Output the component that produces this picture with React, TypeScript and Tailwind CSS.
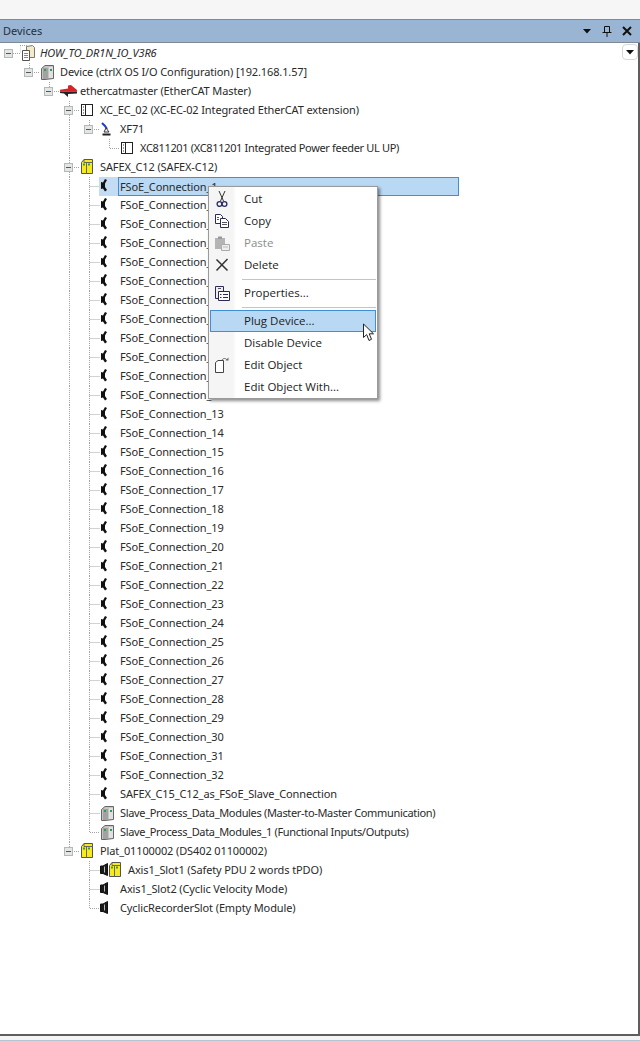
import React from 'react';

type Guide = 'blank' | 'pipe' | 'tee' | 'elbow' | 'exp' | 'expPipe' | 'expRoot';
type IconKind = 'doc' | 'gray' | 'master' | 'slot' | 'arm' | 'yellow' | 'conn' | 'empty' | 'emptyYellow';

type Row = { guides: Guide[]; icon: IconKind; label: string; selected?: boolean; italic?: boolean; tight?: boolean };

const G = '#a4a4a4';

const GuideCell = ({ kind }: { kind: Guide }) => {
  const hasBox = kind === 'exp' || kind === 'expPipe' || kind === 'expRoot';
  return (
    <svg width="20" height="19" className="shrink-0">
      <g stroke={G} strokeDasharray="1 1" fill="none">
        {kind === 'pipe' && <path d="M9.5 0V19" />}
        {kind === 'tee' && <path d="M9.5 0V19M9.5 9.5H20" />}
        {kind === 'elbow' && <path d="M9.5 0V9.5H20" />}
        {kind === 'exp' && <path d="M9.5 0V5M14 9.5H20" />}
        {kind === 'expPipe' && <path d="M9.5 0V5M9.5 14V19M14 9.5H20" />}
        {kind === 'expRoot' && <path d="M13 9.5H20" />}
      </g>
      {hasBox && (
        <g>
          <rect x="4.5" y="5.5" width="8" height="8" fill="#e4e6e6" stroke="#b4b8b8" />
          <path d="M6 9.5H11" stroke="#555" />
        </g>
      )}
    </svg>
  );
};

const NodeIcon = ({ kind }: { kind: IconKind }) => {
  if (kind === 'doc')
    return (
      <svg width="20" height="19" className="shrink-0">
        <path d="M0 1.5H7.5V5M0 1.5V9" stroke={G} strokeDasharray="1 1" fill="none" />
        <path d="M6.5 2.5L12.5 1.5L14.5 3.5V13.5H6.5Z" fill="#f3ecc4" stroke="#777" />
        <path d="M2.5 6.5H9.5V16.5H2.5Z" fill="#fff" stroke="#555" />
        <path d="M4 9.5H8M4 11.5H8M4 13.5H8" stroke="#888" />
      </svg>
    );
  if (kind === 'gray')
    return (
      <svg width="20" height="19" className="shrink-0">
        <path d="M1.5 5.5L5 2.5H13.5V15.5L5 16.5H1.5Z" fill="#c4c4c4" stroke="#666" />
        <rect x="3" y="5" width="5" height="11" fill="#a2a2a2" />
        <rect x="9" y="4" width="4" height="11" fill="#e0e0e0" />
        <path d="M4 6H6V8H4Z" fill="#2f9e55" />
        <path d="M10 6H12V8H10Z" fill="#2f9e55" />
      </svg>
    );
  if (kind === 'master')
    return (
      <svg width="20" height="19" className="shrink-0">
        <path d="M-1 8L8 6.5V3.5L11 3L17 8V9.5H-1Z" fill="#d8232a" />
        <path d="M17 9.5H0V11L4 11.5L8 15V12L17 11.5Z" fill="#222" />
      </svg>
    );
  if (kind === 'slot')
    return (
      <svg width="20" height="19" className="shrink-0">
        <rect x="1.5" y="3.5" width="11" height="11" fill="#fff" stroke="#222" />
        <path d="M5.5 3.5V14.5" stroke="#222" />
        <path d="M3 6H4M3 9H4M3 12H4" stroke="#333" />
      </svg>
    );
  if (kind === 'arm')
    return (
      <svg width="20" height="19" className="shrink-0">
        <path d="M2 3L5 6L7 9" stroke="#1f3fc4" strokeWidth="2" fill="none" />
        <path d="M6 8L9 12H4Z" fill="#fff" stroke="#333" />
        <path d="M2.5 14.5H10.5" stroke="#222" strokeWidth="2" />
      </svg>
    );
  if (kind === 'yellow')
    return (
      <svg width="20" height="19" className="shrink-0">
        <YellowShape x={1} />
      </svg>
    );
  if (kind === 'conn')
    return (
      <svg width="20" height="19" className="shrink-0">
        <path d="M5 2L7 3L5 6.5V10L7 13L5 14.5L3 11.5L1 12V5L3 5.5Z" fill="#111" />
      </svg>
    );
  return (
    <svg width={kind === 'emptyYellow' ? 28 : 20} height="19" className="shrink-0">
      <path d="M0.5 5H3L7.5 2.5V14.5L3 12.5H0.5Z" fill="#1a1a1a" stroke="#111" />
      <path d="M4.5 5.5V11.5" stroke="#bbb" />
      {kind === 'emptyYellow' && <YellowShape x={9} />}
    </svg>
  );
};

const YellowShape = ({ x }: { x: number }) => (
  <g transform={`translate(${x} 0)`}>
    <path d="M0.5 4.5L3 1.5H11.5V15.5H0.5Z" fill="#f6ea1a" stroke="#555" />
    <path d="M5.5 4V15.5M3 1.5V4.5H11.5" stroke="#666" fill="none" />
    <path d="M2 5.5H4V7.5H2ZM7 5.5H9V7.5H7Z" fill="#3e9b45" />
  </g>
);

const blank3: Guide[] = ['blank', 'blank', 'blank'];

const connections: Row[] = Array.from({ length: 32 }, (_, i) => ({
  guides: [...blank3, 'pipe', 'tee'] as Guide[],
  icon: 'conn' as IconKind,
  label: `FSoE_Connection_${i + 1}`,
  selected: i === 0,
}));

const rows: Row[] = [
  { guides: ['expRoot'], icon: 'doc', label: 'HOW_TO_DR1N_IO_V3R6', italic: true },
  { guides: ['blank', 'exp'], icon: 'gray', label: 'Device (ctrlX OS I/O Configuration) [192.168.1.57]' },
  { guides: ['blank', 'blank', 'exp'], icon: 'master', label: 'ethercatmaster (EtherCAT Master)' },
  { guides: [...blank3, 'expPipe'], icon: 'slot', label: 'XC_EC_02 (XC-EC-02 Integrated EtherCAT extension)' },
  { guides: [...blank3, 'pipe', 'exp'], icon: 'arm', label: 'XF71' },
  { guides: [...blank3, 'pipe', 'blank', 'elbow'], icon: 'slot', label: 'XC811201 (XC811201 Integrated Power feeder UL UP)', tight: true },
  { guides: [...blank3, 'expPipe'], icon: 'yellow', label: 'SAFEX_C12 (SAFEX-C12)' },
  ...connections,
  { guides: [...blank3, 'pipe', 'tee'], icon: 'conn', label: 'SAFEX_C15_C12_as_FSoE_Slave_Connection' },
  { guides: [...blank3, 'pipe', 'tee'], icon: 'gray', label: 'Slave_Process_Data_Modules (Master-to-Master Communication)', tight: true },
  { guides: [...blank3, 'pipe', 'elbow'], icon: 'gray', label: 'Slave_Process_Data_Modules_1 (Functional Inputs/Outputs)', tight: true },
  { guides: [...blank3, 'exp'], icon: 'yellow', label: 'Plat_01100002 (DS402 01100002)' },
  { guides: [...blank3, 'blank', 'tee'], icon: 'emptyYellow', label: 'Axis1_Slot1 (Safety PDU 2 words tPDO)' },
  { guides: [...blank3, 'blank', 'tee'], icon: 'empty', label: 'Axis1_Slot2 (Cyclic Velocity Mode)' },
  { guides: [...blank3, 'blank', 'elbow'], icon: 'empty', label: 'CyclicRecorderSlot (Empty Module)' },
];

const TreeRow = ({ row }: { row: Row }) => (
  <div className={row.italic ? "flex h-[20px] items-center font-['Noto_Sans',sans-serif] text-[11px] tracking-[-0.12px]" : "flex h-[19px] items-center font-['Noto_Sans',sans-serif] text-[11px] tracking-[-0.12px]"}>
    {row.guides.map((g, i) => (
      <GuideCell key={i} kind={g} />
    ))}
    <div className={row.selected ? '-ml-px bg-[#c3dcf3] pl-px' : ''}>
      <NodeIcon kind={row.icon} />
    </div>
    {row.selected ? (
      <span className="-ml-[2px] h-[19px] w-[341px] border border-[#3f8fd2] bg-[#b9d8f4] pl-px leading-[17px]">{row.label}</span>
    ) : (
      <span className={row.italic ? 'italic' : row.tight ? 'tracking-[-0.33px]' : ''}>{row.label}</span>
    )}
  </div>
);

const MenuIcon = ({ name }: { name: string }) => {
  if (name === 'Cut')
    return (
      <svg width="12" height="17">
        <path d="M3 0L7.5 10M9 0L4.5 10" stroke="#333" fill="none" />
        <circle cx="3.5" cy="13" r="2.4" fill="none" stroke="#2a2a66" strokeWidth="1.3" />
        <circle cx="8.5" cy="13" r="2.4" fill="none" stroke="#2a2a66" strokeWidth="1.3" />
      </svg>
    );
  if (name === 'Copy')
    return (
      <svg width="16" height="14">
        <path d="M1.5 0.5H6.5L8.5 2.5V9.5H1.5Z" fill="#fff" stroke="#2a2a55" />
        <path d="M6.5 4.5H11.5L14.5 7.5V13.5H6.5Z" fill="#fff" stroke="#2a2a55" />
        <path d="M3 3.5H5M3 5.5H5M8 8.5H13M8 10.5H13" stroke="#555" />
      </svg>
    );
  if (name === 'Paste')
    return (
      <svg width="16" height="15">
        <path d="M1 2H11V13H1Z" fill="#b4b4b4" />
        <path d="M4 0.5H8V3H4Z" fill="#999" />
        <path d="M7.5 8.5H15.5V14.5H7.5Z" fill="#eee" stroke="#aaa" />
        <path d="M9 11H14" stroke="#bbb" />
      </svg>
    );
  if (name === 'Delete')
    return (
      <svg width="14" height="14">
        <path d="M1.5 1.5L12.5 12.5M12.5 1L1.5 12.5" stroke="#333" strokeWidth="1.5" fill="none" />
      </svg>
    );
  if (name === 'Properties...')
    return (
      <svg width="16" height="15">
        <path d="M1.5 0.5H9.5V12.5H1.5Z" fill="#eee" stroke="#2a2a55" />
        <path d="M4 2.5H7" stroke="#555" />
        <path d="M4.5 5.5H15.5V14.5H4.5Z" fill="#fff" stroke="#2a2a55" />
        <path d="M6 8.5H7.5M9 8.5H14M6 11.5H7.5M9 11.5H14" stroke="#2a2a55" />
      </svg>
    );
  if (name === 'Edit Object')
    return (
      <svg width="16" height="17">
        <path d="M1.5 5.5L4 3.5H9.5V15.5H1.5Z" fill="#fff" stroke="#444" />
        <path d="M8 3C9 1 12 1 13 3" stroke="#666" fill="none" />
        <path d="M11.5 3.5H14.5V0.5Z" fill="#666" />
      </svg>
    );
  return null;
};

const MenuItem = ({ label, disabled, active }: { label: string; disabled?: boolean; active?: boolean }) => (
  <div className={active ? 'ml-px flex h-[22px] items-center border border-[#3f8fd2] bg-[#b9d8f4]' : 'flex h-[22px] items-center'}>
    <div className={active ? 'flex w-[33px] shrink-0 items-center justify-center pr-[9px]' : 'flex w-[35px] shrink-0 items-center justify-center pr-[9px]'}>
      <MenuIcon name={label} />
    </div>
    <span className={disabled ? 'text-[#8d8d8d]' : 'text-[#1c1c1c]'}>{label}</span>
  </div>
);

const Separator = () => (
  <div className="flex h-[6px] items-center pl-[33px]">
    <div className="h-px w-full bg-[#c4c4c4]" />
  </div>
);

const ContextMenu = () => (
  <div className="absolute left-[208px] top-[143px] h-[213px] w-[170px] border border-[#9a9a9a] bg-[linear-gradient(to_right,#f5f5f5_24px,#ffffff_27px)] py-px pr-px shadow-[2px_2px_3px_rgba(0,0,0,0.45)]">
    <MenuItem label="Cut" />
    <MenuItem label="Copy" />
    <MenuItem label="Paste" disabled />
    <MenuItem label="Delete" />
    <Separator />
    <MenuItem label="Properties..." />
    <Separator />
    <MenuItem label="Plug Device..." active />
    <MenuItem label="Disable Device" />
    <MenuItem label="Edit Object" />
    <MenuItem label="Edit Object With..." />
    <svg width="15" height="20" className="absolute left-[153px] top-[136px]">
      <path d="M1.5 1V14.5L4.7 11.6L7 17.5L9.5 16.3L7.2 10.8H11.5Z" fill="#fff" stroke="#222" />
    </svg>
  </div>
);

export default function App() {
  return (
    <div className="flex h-[1041px] w-[640px] flex-col overflow-hidden bg-white font-['Open_Sans',sans-serif] text-[11.5px] text-[#2a2a2a]">
      <div className="h-[19px] bg-[#f6f6f6]" />
      <div className="flex h-[24px] items-center justify-between border-y border-y-[#7f8a96] bg-[#9ab5d3] pl-[3px] pr-[8px]">
        <span className="font-['Noto_Sans',sans-serif] text-[11px] text-[#24303c]">Devices</span>
        <div className="flex items-center gap-[10px]">
          <svg width="10" height="8">
            <path d="M1 2H9L5 6.5Z" fill="#111" />
          </svg>
          <svg width="10" height="12">
            <path d="M2.5 1.5H7.5V7.5H2.5ZM0.5 7.5H9.5M5 7.5V12" stroke="#111" fill="none" />
          </svg>
          <svg width="10" height="10">
            <path d="M1 1L9 9M9 1L1 9" stroke="#111" strokeWidth="2" />
          </svg>
        </div>
      </div>
      <div className="relative flex-1 border-b-2 border-r-2 border-[#5e5e5e]">
        <div className="absolute right-0 top-px flex h-[16px] w-[16px] items-center justify-center rounded-sm border border-[#d8d8d8] bg-white">
          <svg width="10" height="8">
            <path d="M1 2H9L5 6.5Z" fill="#111" />
          </svg>
        </div>
        <div>
          {rows.map((r, i) => (
            <TreeRow key={i} row={r} />
          ))}
        </div>
        <ContextMenu />
      </div>
      <div className="h-[5px] border-b border-b-[#b5c5d0] bg-[#f4f4f4]" />
    </div>
  );
}
